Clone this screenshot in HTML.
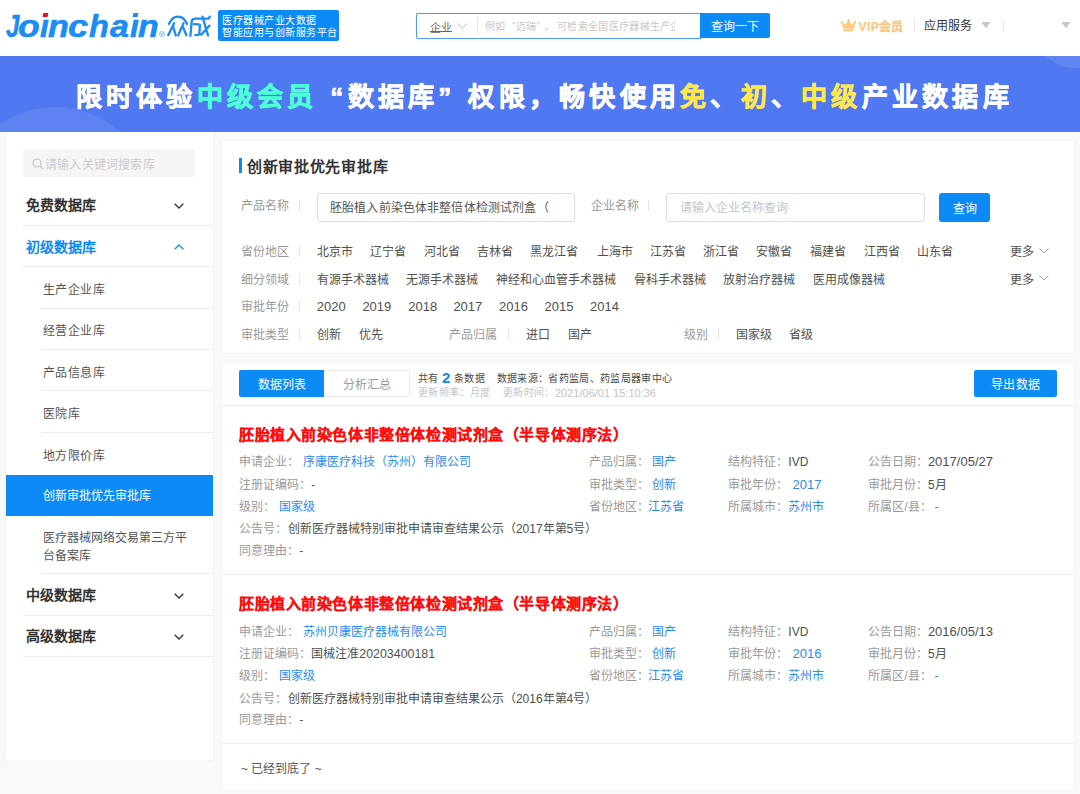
<!DOCTYPE html>
<html lang="zh-CN"><head><meta charset="utf-8"><style>
*{margin:0;padding:0;box-sizing:border-box}
html,body{width:1080px;height:794px;overflow:hidden;background:#f9f9f9;font-family:"Liberation Sans",sans-serif;color:#333}
div,span{white-space:nowrap}
.a{position:absolute}
.box{position:absolute;background:#fff}
.hl{position:absolute;height:1px;background:#ededed}
.vs{position:absolute;width:1px;background:#e3e3e3}
.t{position:absolute;font-size:12px;line-height:20px}
.lbl{color:#999}
.lnk{color:#2a8bf5}
.dk{color:#505050}
.chev{position:absolute;width:6px;height:6px;border-right:1.2px solid #333;border-bottom:1.2px solid #333;transform:rotate(45deg)}
.g{color:#4cffd6}.y{color:#ffe84c}
.q{display:inline-block}
.cl{}
</style></head><body>
<div class="box" style="left:0px;top:0px;width:1080px;height:56px;"></div>
<div class="a" style="left:6.00px;top:1px;font-size:32px;line-height:50px;font-weight:bold;font-style:italic;color:#1b8cf2;-webkit-text-stroke:0.6px #1b8cf2;transform:scaleX(0.750);transform-origin:0 0">J</div>
<div class="a" style="left:17.79px;top:1px;font-size:32px;line-height:50px;font-weight:bold;font-style:italic;color:#1b8cf2;-webkit-text-stroke:0.6px #1b8cf2;transform:scaleX(1.112);transform-origin:0 0">o</div>
<div class="a" style="left:40.00px;top:1px;font-size:32px;line-height:50px;font-weight:bold;font-style:italic;color:#1b8cf2;-webkit-text-stroke:0.6px #1b8cf2;transform:scaleX(1.000);transform-origin:0 0">ı</div>
<div class="a" style="left:47.80px;top:1px;font-size:32px;line-height:50px;font-weight:bold;font-style:italic;color:#1b8cf2;-webkit-text-stroke:0.6px #1b8cf2;transform:scaleX(1.067);transform-origin:0 0">n</div>
<div class="a" style="left:67.77px;top:1px;font-size:32px;line-height:50px;font-weight:bold;font-style:italic;color:#1b8cf2;-webkit-text-stroke:0.6px #1b8cf2;transform:scaleX(1.131);transform-origin:0 0">c</div>
<div class="a" style="left:89.20px;top:1px;font-size:32px;line-height:50px;font-weight:bold;font-style:italic;color:#1b8cf2;-webkit-text-stroke:0.6px #1b8cf2;transform:scaleX(1.017);transform-origin:0 0">h</div>
<div class="a" style="left:110.00px;top:1px;font-size:32px;line-height:50px;font-weight:bold;font-style:italic;color:#1b8cf2;-webkit-text-stroke:0.6px #1b8cf2;transform:scaleX(1.062);transform-origin:0 0">a</div>
<div class="a" style="left:130.00px;top:1px;font-size:32px;line-height:50px;font-weight:bold;font-style:italic;color:#1b8cf2;-webkit-text-stroke:0.6px #1b8cf2;transform:scaleX(1.000);transform-origin:0 0">ı</div>
<div class="a" style="left:138.00px;top:1px;font-size:32px;line-height:50px;font-weight:bold;font-style:italic;color:#1b8cf2;-webkit-text-stroke:0.6px #1b8cf2;transform:scaleX(1.056);transform-origin:0 0">n</div>
<div class="a" style="left:42.6px;top:13px;width:5px;height:3.5px;background:#e0141e;transform:skewX(-12deg)"></div>
<div class="a" style="left:132.6px;top:13.4px;width:5px;height:3.5px;background:#1b8cf2;transform:skewX(-12deg)"></div>
<svg class="a" style="left:159px;top:31px" width="6" height="6" viewBox="0 0 6 6"><circle cx="3" cy="3" r="2.4" fill="none" stroke="#6fb3f5" stroke-width="0.9"/><circle cx="3" cy="3" r="0.9" fill="#6fb3f5"/></svg>
<svg class="a" style="left:160px;top:10px" width="56" height="32" viewBox="160 10 56 32"><path d="M168.9 23.8 C171.7 19.1 173.3 16.6 178.3 16.6 C182.8 16.6 185.0 19.1 187.1 24.0 M174.2 23.1 L168.2 35.3 M173.1 26.6 L175.8 35.5 M183.6 23.1 L178.2 35.3 M182.8 26.6 L186.4 35.3 M190.4 35.8 L191.7 21.3 C191.9 19.1 193.3 18.6 195.6 18.6 L207.8 18.6 C209.2 18.6 209.7 17.7 209.7 16.6 M193.9 24.1 L198.9 24.4 C199.7 24.4 200.0 24.9 199.9 25.8 L199.3 33.8 C199.2 34.9 198.3 35.2 195.3 35.2 M202.5 16.6 L208.1 35.5 M209.4 25.7 L201.2 34.6" fill="none" stroke="#1b8cf2" stroke-width="2.3" stroke-linecap="round" stroke-linejoin="round"/></svg>
<div class="box" style="left:218px;top:10px;width:121px;height:31px;background:#0c8af6;border-radius:2px"></div>
<div class="a" style="left:222px;top:14.5px;font-size:10px;letter-spacing:0.5px;line-height:12.5px;color:#fff">医疗器械产业大数据<br>智能应用与创新服务平台</div>
<div class="box" style="left:416px;top:13px;width:285px;height:26px;border:1px solid #4c9df4;border-right:none;border-radius:2px 0 0 2px"></div>
<div class="t " style="left:430px;top:17.5px;font-size:11px;line-height:20px;color:#666;text-decoration:underline;text-underline-offset:-0.5px;text-decoration-thickness:1px">企业</div>
<svg class="a" style="left:457px;top:23px" width="11" height="7" viewBox="0 0 11 7"><path d="M0.5 0.5 L5.5 5.5 L10.5 0.5" fill="none" stroke="#c4c4c4" stroke-width="1"/></svg>
<div class="vs" style="left:477px;top:18px;height:17px;background:#e6e6e6"></div>
<div class="a" style="left:485px;top:16.5px;width:190px;overflow:hidden;font-size:10px;letter-spacing:0.3px;line-height:20px;color:#c8c8c8">例如<span class="q" style="width:10.3px;text-align:right">“</span>迈瑞<span class="q" style="width:10.3px">”</span><span class="q" style="width:10.3px;text-indent:-3px">，</span>可检索全国医疗器械生产企业</div>
<div class="box" style="left:700px;top:13px;width:70px;height:25px;background:#0c8af6;border-radius:0 2px 2px 0"></div>
<div class="t " style="left:711px;top:16.5px;font-size:12px;line-height:20px;color:#fff">查询一下</div>
<svg class="a" style="left:840.5px;top:18.5px" width="15" height="13" viewBox="0 0 15 13"><path d="M1 3.2 L4.6 6.6 L7.5 1.2 L10.4 6.6 L14 3.2 L12.6 9.2 L2.4 9.2 Z" fill="#fcc67c" stroke="#fcc67c" stroke-width="0.8" stroke-linejoin="round"/><circle cx="1" cy="3" r="1.1" fill="#fcc67c"/><circle cx="7.5" cy="1.2" r="1.1" fill="#fcc67c"/><circle cx="14" cy="3" r="1.1" fill="#fcc67c"/><rect x="2.6" y="10.3" width="9.8" height="2" fill="#fcc67c"/></svg>
<div class="t " style="left:858.5px;top:16.5px;font-size:12px;line-height:20px;color:#fcc67c;font-weight:bold;letter-spacing:0.4px;-webkit-text-stroke:0.15px #fcc67c">VIP会员</div>
<div class="vs" style="left:914px;top:20px;height:12px;background:#e8e8e8"></div>
<div class="t " style="left:924px;top:16.0px;font-size:12px;line-height:20px;color:#333">应用服务</div>
<svg class="a" style="left:981px;top:22px" width="10" height="7" viewBox="0 0 10 7"><path d="M0.5 0 H9.5 L5 6.5 Z" fill="#c6c6c6"/></svg>
<div class="vs" style="left:1003px;top:20px;height:12px;background:#e8e8e8"></div>
<svg class="a" style="left:1061px;top:22px" width="10" height="7" viewBox="0 0 10 7"><path d="M0.5 0 H9.5 L5 6.5 Z" fill="#c6c6c6"/></svg>
<div class="a" style="left:0;top:56px;width:1080px;height:76px;background:#5078f0;overflow:hidden;z-index:2"><div class="a" style="left:-42px;top:51px;width:194px;height:194px;border-radius:50%;background:rgba(255,255,255,0.08)"></div><div class="a" style="left:1034.4px;top:-69.7px;width:81.2px;height:81.2px;border-radius:50%;background:rgba(255,255,255,0.1)"></div></div>
<div class="a" style="left:75.5px;top:76.5px;z-index:3;font-size:26px;line-height:40px;font-weight:900;color:#fff;letter-spacing:4.25px;-webkit-text-stroke:0.7px">限时体验<span class="g">中级会员</span><span class="q" style="width:30px;text-align:right">“</span>数据库<span class="q" style="width:30px">”</span>权限，畅快使用<span class="y">免</span>、<span class="y">初</span>、<span class="y">中级</span>产业数据库</div>
<div class="box" style="left:6px;top:132px;width:207px;height:628px;box-shadow:0 0 3px rgba(0,0,0,0.06)"></div>
<div class="box" style="left:23px;top:149px;width:172px;height:28px;background:#f5f5f5;border-radius:2px"></div>
<svg class="a" style="left:31.5px;top:158px" width="12" height="12" viewBox="0 0 12 12"><circle cx="5" cy="5" r="4" fill="none" stroke="#c4c4c4" stroke-width="1.2"/><path d="M8 8 L11 11" stroke="#c4c4c4" stroke-width="1.2"/></svg>
<div class="t " style="left:45px;top:154.5px;font-size:12px;line-height:20px;color:#cccccc;letter-spacing:0.2px">请输入关键词搜索库</div>
<div class="t " style="left:26px;top:195.0px;font-size:14px;line-height:20px;font-weight:bold;color:#333">免费数据库</div>
<svg class="a" style="left:174px;top:203px" width="10" height="6" viewBox="0 0 10 6"><path d="M0.7 0.7 L5 5 L9.3 0.7" fill="none" stroke="#333" stroke-width="1.3"/></svg>
<div class="hl" style="left:23px;top:225px;width:190px;background:#ededed"></div>
<div class="t " style="left:26px;top:236.5px;font-size:14px;line-height:20px;font-weight:bold;color:#0c8af6">初级数据库</div>
<svg class="a" style="left:174px;top:244px" width="10" height="6" viewBox="0 0 10 6"><path d="M0.7 5.3 L5 1 L9.3 5.3" fill="none" stroke="#0c8af6" stroke-width="1.3"/></svg>
<div class="hl" style="left:23px;top:266px;width:190px;background:#ededed"></div>
<div class="t " style="left:43px;top:280.1px;font-size:12px;line-height:20px;color:#555;letter-spacing:0.4px">生产企业库</div>
<div class="hl" style="left:41px;top:308px;width:172px;background:#ededed"></div>
<div class="t " style="left:43px;top:321.3px;font-size:12px;line-height:20px;color:#555;letter-spacing:0.4px">经营企业库</div>
<div class="hl" style="left:41px;top:349px;width:172px;background:#ededed"></div>
<div class="t " style="left:43px;top:362.7px;font-size:12px;line-height:20px;color:#555;letter-spacing:0.4px">产品信息库</div>
<div class="hl" style="left:41px;top:390px;width:172px;background:#ededed"></div>
<div class="t " style="left:43px;top:403.7px;font-size:12px;line-height:20px;color:#555;letter-spacing:0.4px">医院库</div>
<div class="hl" style="left:41px;top:432px;width:172px;background:#ededed"></div>
<div class="t " style="left:43px;top:445.5px;font-size:12px;line-height:20px;color:#555;letter-spacing:0.4px">地方限价库</div>
<div class="box" style="left:6px;top:475px;width:207px;height:41px;background:#0c8af6"></div>
<div class="t " style="left:43px;top:486.0px;font-size:12px;line-height:20px;color:#fff">创新审批优先审批库</div>
<div class="t " style="left:43px;top:528.0px;font-size:12px;line-height:20px;color:#555">医疗器械网络交易第三方平</div>
<div class="t " style="left:43px;top:546.0px;font-size:12px;line-height:20px;color:#555">台备案库</div>
<div class="hl" style="left:41px;top:573px;width:172px;background:#ededed"></div>
<div class="t " style="left:26px;top:585.0px;font-size:14px;line-height:20px;font-weight:bold;color:#333">中级数据库</div>
<svg class="a" style="left:174px;top:593px" width="10" height="6" viewBox="0 0 10 6"><path d="M0.7 0.7 L5 5 L9.3 0.7" fill="none" stroke="#333" stroke-width="1.3"/></svg>
<div class="hl" style="left:23px;top:615px;width:190px;background:#ededed"></div>
<div class="t " style="left:26px;top:626.0px;font-size:14px;line-height:20px;font-weight:bold;color:#333">高级数据库</div>
<svg class="a" style="left:174px;top:634px" width="10" height="6" viewBox="0 0 10 6"><path d="M0.7 0.7 L5 5 L9.3 0.7" fill="none" stroke="#333" stroke-width="1.3"/></svg>
<div class="hl" style="left:23px;top:656px;width:190px;background:#ededed"></div>
<div class="box" style="left:222px;top:141px;width:852px;height:212px;box-shadow:0 0 3px rgba(0,0,0,0.06)"></div>
<div class="box" style="left:239px;top:158px;width:3px;height:15px;background:#0c8af6"></div>
<div class="t " style="left:247px;top:156.5px;font-size:15px;line-height:20px;font-weight:bold;color:#333;letter-spacing:0.7px">创新审批优先审批库</div>
<div class="t lbl" style="left:241px;top:196.0px;font-size:12px;line-height:20px;">产品名称</div>
<div class="vs" style="left:299px;top:200px;height:11px;background:#e3e3e3"></div>
<div class="box" style="left:317px;top:193px;width:258px;height:29px;border:1px solid #dcdfe6;border-radius:3px"></div>
<div class="a" style="left:330px;top:197.5px;width:219px;overflow:hidden;font-size:12px;line-height:20px;color:#555;letter-spacing:0.15px">胚胎植入前染色体非整倍体检测试剂盒（半导体测序法）</div>
<div class="t lbl" style="left:591px;top:195.5px;font-size:12px;line-height:20px;">企业名称</div>
<div class="vs" style="left:648px;top:200px;height:11px;background:#e3e3e3"></div>
<div class="box" style="left:666px;top:193px;width:259px;height:29px;border:1px solid #dcdfe6;border-radius:3px"></div>
<div class="t " style="left:680px;top:198.0px;font-size:12px;line-height:20px;color:#c0c4cc">请输入企业名称查询</div>
<div class="box" style="left:939px;top:193px;width:51px;height:29px;background:#0c8af6;border-radius:3px"></div>
<div class="t " style="left:953px;top:198.5px;font-size:12px;line-height:20px;color:#fff">查询</div>
<div class="t lbl" style="left:241px;top:242.2px;font-size:12px;line-height:20px;">省份地区</div>
<div class="vs" style="left:299px;top:246px;height:11px;background:#e3e3e3"></div>
<div class="t dk" style="left:316.8px;top:242.2px;font-size:12px;line-height:20px;">北京市</div>
<div class="t dk" style="left:370px;top:242.2px;font-size:12px;line-height:20px;">辽宁省</div>
<div class="t dk" style="left:424px;top:242.2px;font-size:12px;line-height:20px;">河北省</div>
<div class="t dk" style="left:477px;top:242.2px;font-size:12px;line-height:20px;">吉林省</div>
<div class="t dk" style="left:530px;top:242.2px;font-size:12px;line-height:20px;">黑龙江省</div>
<div class="t dk" style="left:597px;top:242.2px;font-size:12px;line-height:20px;">上海市</div>
<div class="t dk" style="left:650px;top:242.2px;font-size:12px;line-height:20px;">江苏省</div>
<div class="t dk" style="left:703px;top:242.2px;font-size:12px;line-height:20px;">浙江省</div>
<div class="t dk" style="left:756px;top:242.2px;font-size:12px;line-height:20px;">安徽省</div>
<div class="t dk" style="left:810px;top:242.2px;font-size:12px;line-height:20px;">福建省</div>
<div class="t dk" style="left:864px;top:242.2px;font-size:12px;line-height:20px;">江西省</div>
<div class="t dk" style="left:917px;top:242.2px;font-size:12px;line-height:20px;">山东省</div>
<div class="t dk" style="left:1010px;top:242.2px;font-size:12px;line-height:20px;">更多</div>
<svg class="a" style="left:1039px;top:247.7px" width="10" height="6" viewBox="0 0 10 6"><path d="M0.5 0.5 L5 5 L9.5 0.5" fill="none" stroke="#a0a0a0" stroke-width="1"/></svg>
<div class="t lbl" style="left:241px;top:269.6px;font-size:12px;line-height:20px;">细分领域</div>
<div class="vs" style="left:299px;top:274px;height:11px;background:#e3e3e3"></div>
<div class="t dk" style="left:316.8px;top:269.6px;font-size:12px;line-height:20px;">有源手术器械</div>
<div class="t dk" style="left:406.4px;top:269.6px;font-size:12px;line-height:20px;">无源手术器械</div>
<div class="t dk" style="left:496px;top:269.6px;font-size:12px;line-height:20px;">神经和心血管手术器械</div>
<div class="t dk" style="left:634px;top:269.6px;font-size:12px;line-height:20px;">骨科手术器械</div>
<div class="t dk" style="left:723px;top:269.6px;font-size:12px;line-height:20px;">放射治疗器械</div>
<div class="t dk" style="left:813px;top:269.6px;font-size:12px;line-height:20px;">医用成像器械</div>
<div class="t dk" style="left:1010px;top:269.6px;font-size:12px;line-height:20px;">更多</div>
<svg class="a" style="left:1039px;top:275.1px" width="10" height="6" viewBox="0 0 10 6"><path d="M0.5 0.5 L5 5 L9.5 0.5" fill="none" stroke="#a0a0a0" stroke-width="1"/></svg>
<div class="t lbl" style="left:241px;top:297.0px;font-size:12px;line-height:20px;">审批年份</div>
<div class="vs" style="left:299px;top:301px;height:11px;background:#e3e3e3"></div>
<div class="t dk" style="left:316.8px;top:297.0px;font-size:13px;line-height:20px;">2020</div>
<div class="t dk" style="left:362.4px;top:297.0px;font-size:13px;line-height:20px;">2019</div>
<div class="t dk" style="left:408.2px;top:297.0px;font-size:13px;line-height:20px;">2018</div>
<div class="t dk" style="left:453.4px;top:297.0px;font-size:13px;line-height:20px;">2017</div>
<div class="t dk" style="left:499px;top:297.0px;font-size:13px;line-height:20px;">2016</div>
<div class="t dk" style="left:544.5px;top:297.0px;font-size:13px;line-height:20px;">2015</div>
<div class="t dk" style="left:590px;top:297.0px;font-size:13px;line-height:20px;">2014</div>
<div class="t lbl" style="left:241px;top:324.6px;font-size:12px;line-height:20px;">审批类型</div>
<div class="vs" style="left:299px;top:329px;height:11px;background:#e3e3e3"></div>
<div class="t dk" style="left:316.8px;top:324.6px;font-size:12px;line-height:20px;">创新</div>
<div class="t dk" style="left:358.5px;top:324.6px;font-size:12px;line-height:20px;">优先</div>
<div class="t lbl" style="left:449px;top:324.6px;font-size:12px;line-height:20px;">产品归属</div>
<div class="vs" style="left:508px;top:328px;height:11px;background:#e3e3e3"></div>
<div class="t dk" style="left:526px;top:324.6px;font-size:12px;line-height:20px;">进口</div>
<div class="t dk" style="left:568px;top:324.6px;font-size:12px;line-height:20px;">国产</div>
<div class="t lbl" style="left:684px;top:324.6px;font-size:12px;line-height:20px;">级别</div>
<div class="vs" style="left:718px;top:328px;height:11px;background:#e3e3e3"></div>
<div class="t dk" style="left:736px;top:324.6px;font-size:12px;line-height:20px;">国家级</div>
<div class="t dk" style="left:789px;top:324.6px;font-size:12px;line-height:20px;">省级</div>
<div class="box" style="left:222px;top:363px;width:852px;height:427px;box-shadow:0 0 3px rgba(0,0,0,0.06)"></div>
<div class="box" style="left:239px;top:370px;width:85px;height:27px;background:#0c8af6;border-radius:2px 0 0 2px"></div>
<div class="t " style="left:258px;top:375.0px;font-size:12px;line-height:20px;color:#fff">数据列表</div>
<div class="box" style="left:324px;top:370px;width:86px;height:27px;border:1px solid #ebebeb;border-left:none;border-radius:0 2px 2px 0"></div>
<div class="t " style="left:343px;top:375.0px;font-size:12px;line-height:20px;color:#999">分析汇总</div>
<div class="t " style="left:418px;top:368.7px;font-size:10px;line-height:20px;color:#4a4a4a;letter-spacing:0.35px">共有</div>
<div class="t " style="left:442px;top:368.0px;font-size:15px;line-height:20px;color:#0c8af6;font-weight:bold">2</div>
<div class="t " style="left:454px;top:368.7px;font-size:10px;line-height:20px;color:#4a4a4a;letter-spacing:0.35px">条数据</div>
<div class="t " style="left:496.5px;top:368.7px;font-size:10px;line-height:20px;color:#4a4a4a;letter-spacing:0.35px">数据来源<span class="cl">：</span>省药监局、药监局器审中心</div>
<div class="t " style="left:418px;top:383.3px;font-size:10px;line-height:20px;color:#c4c4c4;letter-spacing:0.35px">更新频率<span class="cl">：</span>月度</div>
<div class="t " style="left:503px;top:383.3px;font-size:10px;line-height:20px;color:#c4c4c4;letter-spacing:0.35px">更新时间<span class="cl">：</span></div>
<div class="t " style="left:555px;top:383.3px;font-size:11px;line-height:20px;color:#c4c4c4">2021/06/01 15:10:36</div>
<div class="box" style="left:974px;top:370px;width:83px;height:27px;background:#0c8af6;border-radius:2px"></div>
<div class="t " style="left:991px;top:374.5px;font-size:12px;line-height:20px;color:#fff;letter-spacing:0.4px">导出数据</div>
<div class="hl" style="left:222px;top:405px;width:852px;background:#ededed"></div>
<div class="t " style="left:239px;top:424.8px;font-size:15px;line-height:20px;font-weight:bold;color:#ff0a0a;letter-spacing:0.58px;-webkit-text-stroke:0.15px #ff0a0a">胚胎植入前染色体非整倍体检测试剂盒（半导体测序法）</div>
<div class="t lbl" style="left:239.3px;top:452.4px;font-size:12px;line-height:20px;">申请企业<span class="cl">：</span></div>
<div class="t lnk" style="left:302.8px;top:452.4px;font-size:12px;line-height:20px;">序康医疗科技（苏州）有限公司</div>
<div class="t lbl" style="left:239.3px;top:475.1px;font-size:12px;line-height:20px;">注册证编码<span class="cl">：</span></div>
<div class="t dk" style="left:311.3px;top:475.1px;font-size:12px;line-height:20px;">-</div>
<div class="t lbl" style="left:239.3px;top:496.7px;font-size:12px;line-height:20px;">级别<span class="cl">：</span></div>
<div class="t lnk" style="left:278.8px;top:496.7px;font-size:12px;line-height:20px;">国家级</div>
<div class="t lbl" style="left:239.3px;top:519.4px;font-size:12px;line-height:20px;">公告号<span class="cl">：</span></div>
<div class="t dk" style="left:287.9px;top:519.4px;font-size:12px;line-height:20px;">创新医疗器械特别审批申请审查结果公示（2017年第5号）</div>
<div class="t lbl" style="left:239.3px;top:541.1px;font-size:12px;line-height:20px;">同意理由<span class="cl">：</span></div>
<div class="t dk" style="left:299.3px;top:541.1px;font-size:12px;line-height:20px;">-</div>
<div class="t lbl" style="left:588.8px;top:452.4px;font-size:12px;line-height:20px;">产品归属<span class="cl">：</span></div>
<div class="t lnk" style="left:651.9px;top:452.4px;font-size:12px;line-height:20px;">国产</div>
<div class="t lbl" style="left:588.8px;top:475.1px;font-size:12px;line-height:20px;">审批类型<span class="cl">：</span></div>
<div class="t lnk" style="left:651.9px;top:475.1px;font-size:12px;line-height:20px;">创新</div>
<div class="t lbl" style="left:588.8px;top:496.7px;font-size:12px;line-height:20px;">省份地区<span class="cl">：</span></div>
<div class="t lnk" style="left:648px;top:496.7px;font-size:12px;line-height:20px;">江苏省</div>
<div class="t lbl" style="left:728.1px;top:452.4px;font-size:12px;line-height:20px;">结构特征<span class="cl">：</span></div>
<div class="t dk" style="left:788.3px;top:452.4px;font-size:12px;line-height:20px;">IVD</div>
<div class="t lbl" style="left:728.1px;top:475.1px;font-size:12px;line-height:20px;">审批年份<span class="cl">：</span></div>
<div class="t lnk" style="left:792.5px;top:475.1px;font-size:13px;line-height:20px;">2017</div>
<div class="t lbl" style="left:728.1px;top:496.7px;font-size:12px;line-height:20px;">所属城市<span class="cl">：</span></div>
<div class="t lnk" style="left:788.3px;top:496.7px;font-size:12px;line-height:20px;">苏州市</div>
<div class="t lbl" style="left:868.2px;top:452.4px;font-size:12px;line-height:20px;">公告日期<span class="cl">：</span></div>
<div class="t dk" style="left:927.9px;top:452.4px;font-size:13px;line-height:20px;">2017/05/27</div>
<div class="t lbl" style="left:868.2px;top:475.1px;font-size:12px;line-height:20px;">审批月份<span class="cl">：</span></div>
<div class="t dk" style="left:927.9px;top:475.1px;font-size:12px;line-height:20px;">5月</div>
<div class="t lbl" style="left:868.2px;top:496.7px;font-size:12px;line-height:20px;">所属区/县<span class="cl">：</span></div>
<div class="t lnk" style="left:934.5px;top:496.7px;font-size:12px;line-height:20px;">-</div>
<div class="t " style="left:239px;top:594.1px;font-size:15px;line-height:20px;font-weight:bold;color:#ff0a0a;letter-spacing:0.58px;-webkit-text-stroke:0.15px #ff0a0a">胚胎植入前染色体非整倍体检测试剂盒（半导体测序法）</div>
<div class="t lbl" style="left:239.3px;top:621.7px;font-size:12px;line-height:20px;">申请企业<span class="cl">：</span></div>
<div class="t lnk" style="left:302.8px;top:621.7px;font-size:12px;line-height:20px;">苏州贝康医疗器械有限公司</div>
<div class="t lbl" style="left:239.3px;top:644.4px;font-size:12px;line-height:20px;">注册证编码<span class="cl">：</span></div>
<div class="t dk" style="left:311.3px;top:644.4px;font-size:12px;line-height:20px;">国械注准<span style="font-size:12.4px">20203400181</span></div>
<div class="t lbl" style="left:239.3px;top:666.0px;font-size:12px;line-height:20px;">级别<span class="cl">：</span></div>
<div class="t lnk" style="left:278.8px;top:666.0px;font-size:12px;line-height:20px;">国家级</div>
<div class="t lbl" style="left:239.3px;top:688.7px;font-size:12px;line-height:20px;">公告号<span class="cl">：</span></div>
<div class="t dk" style="left:287.9px;top:688.7px;font-size:12px;line-height:20px;">创新医疗器械特别审批申请审查结果公示（2016年第4号）</div>
<div class="t lbl" style="left:239.3px;top:710.4px;font-size:12px;line-height:20px;">同意理由<span class="cl">：</span></div>
<div class="t dk" style="left:299.3px;top:710.4px;font-size:12px;line-height:20px;">-</div>
<div class="t lbl" style="left:588.8px;top:621.7px;font-size:12px;line-height:20px;">产品归属<span class="cl">：</span></div>
<div class="t lnk" style="left:651.9px;top:621.7px;font-size:12px;line-height:20px;">国产</div>
<div class="t lbl" style="left:588.8px;top:644.4px;font-size:12px;line-height:20px;">审批类型<span class="cl">：</span></div>
<div class="t lnk" style="left:651.9px;top:644.4px;font-size:12px;line-height:20px;">创新</div>
<div class="t lbl" style="left:588.8px;top:666.0px;font-size:12px;line-height:20px;">省份地区<span class="cl">：</span></div>
<div class="t lnk" style="left:648px;top:666.0px;font-size:12px;line-height:20px;">江苏省</div>
<div class="t lbl" style="left:728.1px;top:621.7px;font-size:12px;line-height:20px;">结构特征<span class="cl">：</span></div>
<div class="t dk" style="left:788.3px;top:621.7px;font-size:12px;line-height:20px;">IVD</div>
<div class="t lbl" style="left:728.1px;top:644.4px;font-size:12px;line-height:20px;">审批年份<span class="cl">：</span></div>
<div class="t lnk" style="left:792.5px;top:644.4px;font-size:13px;line-height:20px;">2016</div>
<div class="t lbl" style="left:728.1px;top:666.0px;font-size:12px;line-height:20px;">所属城市<span class="cl">：</span></div>
<div class="t lnk" style="left:788.3px;top:666.0px;font-size:12px;line-height:20px;">苏州市</div>
<div class="t lbl" style="left:868.2px;top:621.7px;font-size:12px;line-height:20px;">公告日期<span class="cl">：</span></div>
<div class="t dk" style="left:927.9px;top:621.7px;font-size:13px;line-height:20px;">2016/05/13</div>
<div class="t lbl" style="left:868.2px;top:644.4px;font-size:12px;line-height:20px;">审批月份<span class="cl">：</span></div>
<div class="t dk" style="left:927.9px;top:644.4px;font-size:12px;line-height:20px;">5月</div>
<div class="t lbl" style="left:868.2px;top:666.0px;font-size:12px;line-height:20px;">所属区/县<span class="cl">：</span></div>
<div class="t lnk" style="left:934.5px;top:666.0px;font-size:12px;line-height:20px;">-</div>
<div class="hl" style="left:222px;top:574px;width:852px;background:#ededed"></div>
<div class="hl" style="left:222px;top:743px;width:852px;background:#ededed"></div>
<div class="t " style="left:241px;top:758.8px;font-size:12px;line-height:20px;color:#555">~ 已经到底了 ~</div>
</body></html>
